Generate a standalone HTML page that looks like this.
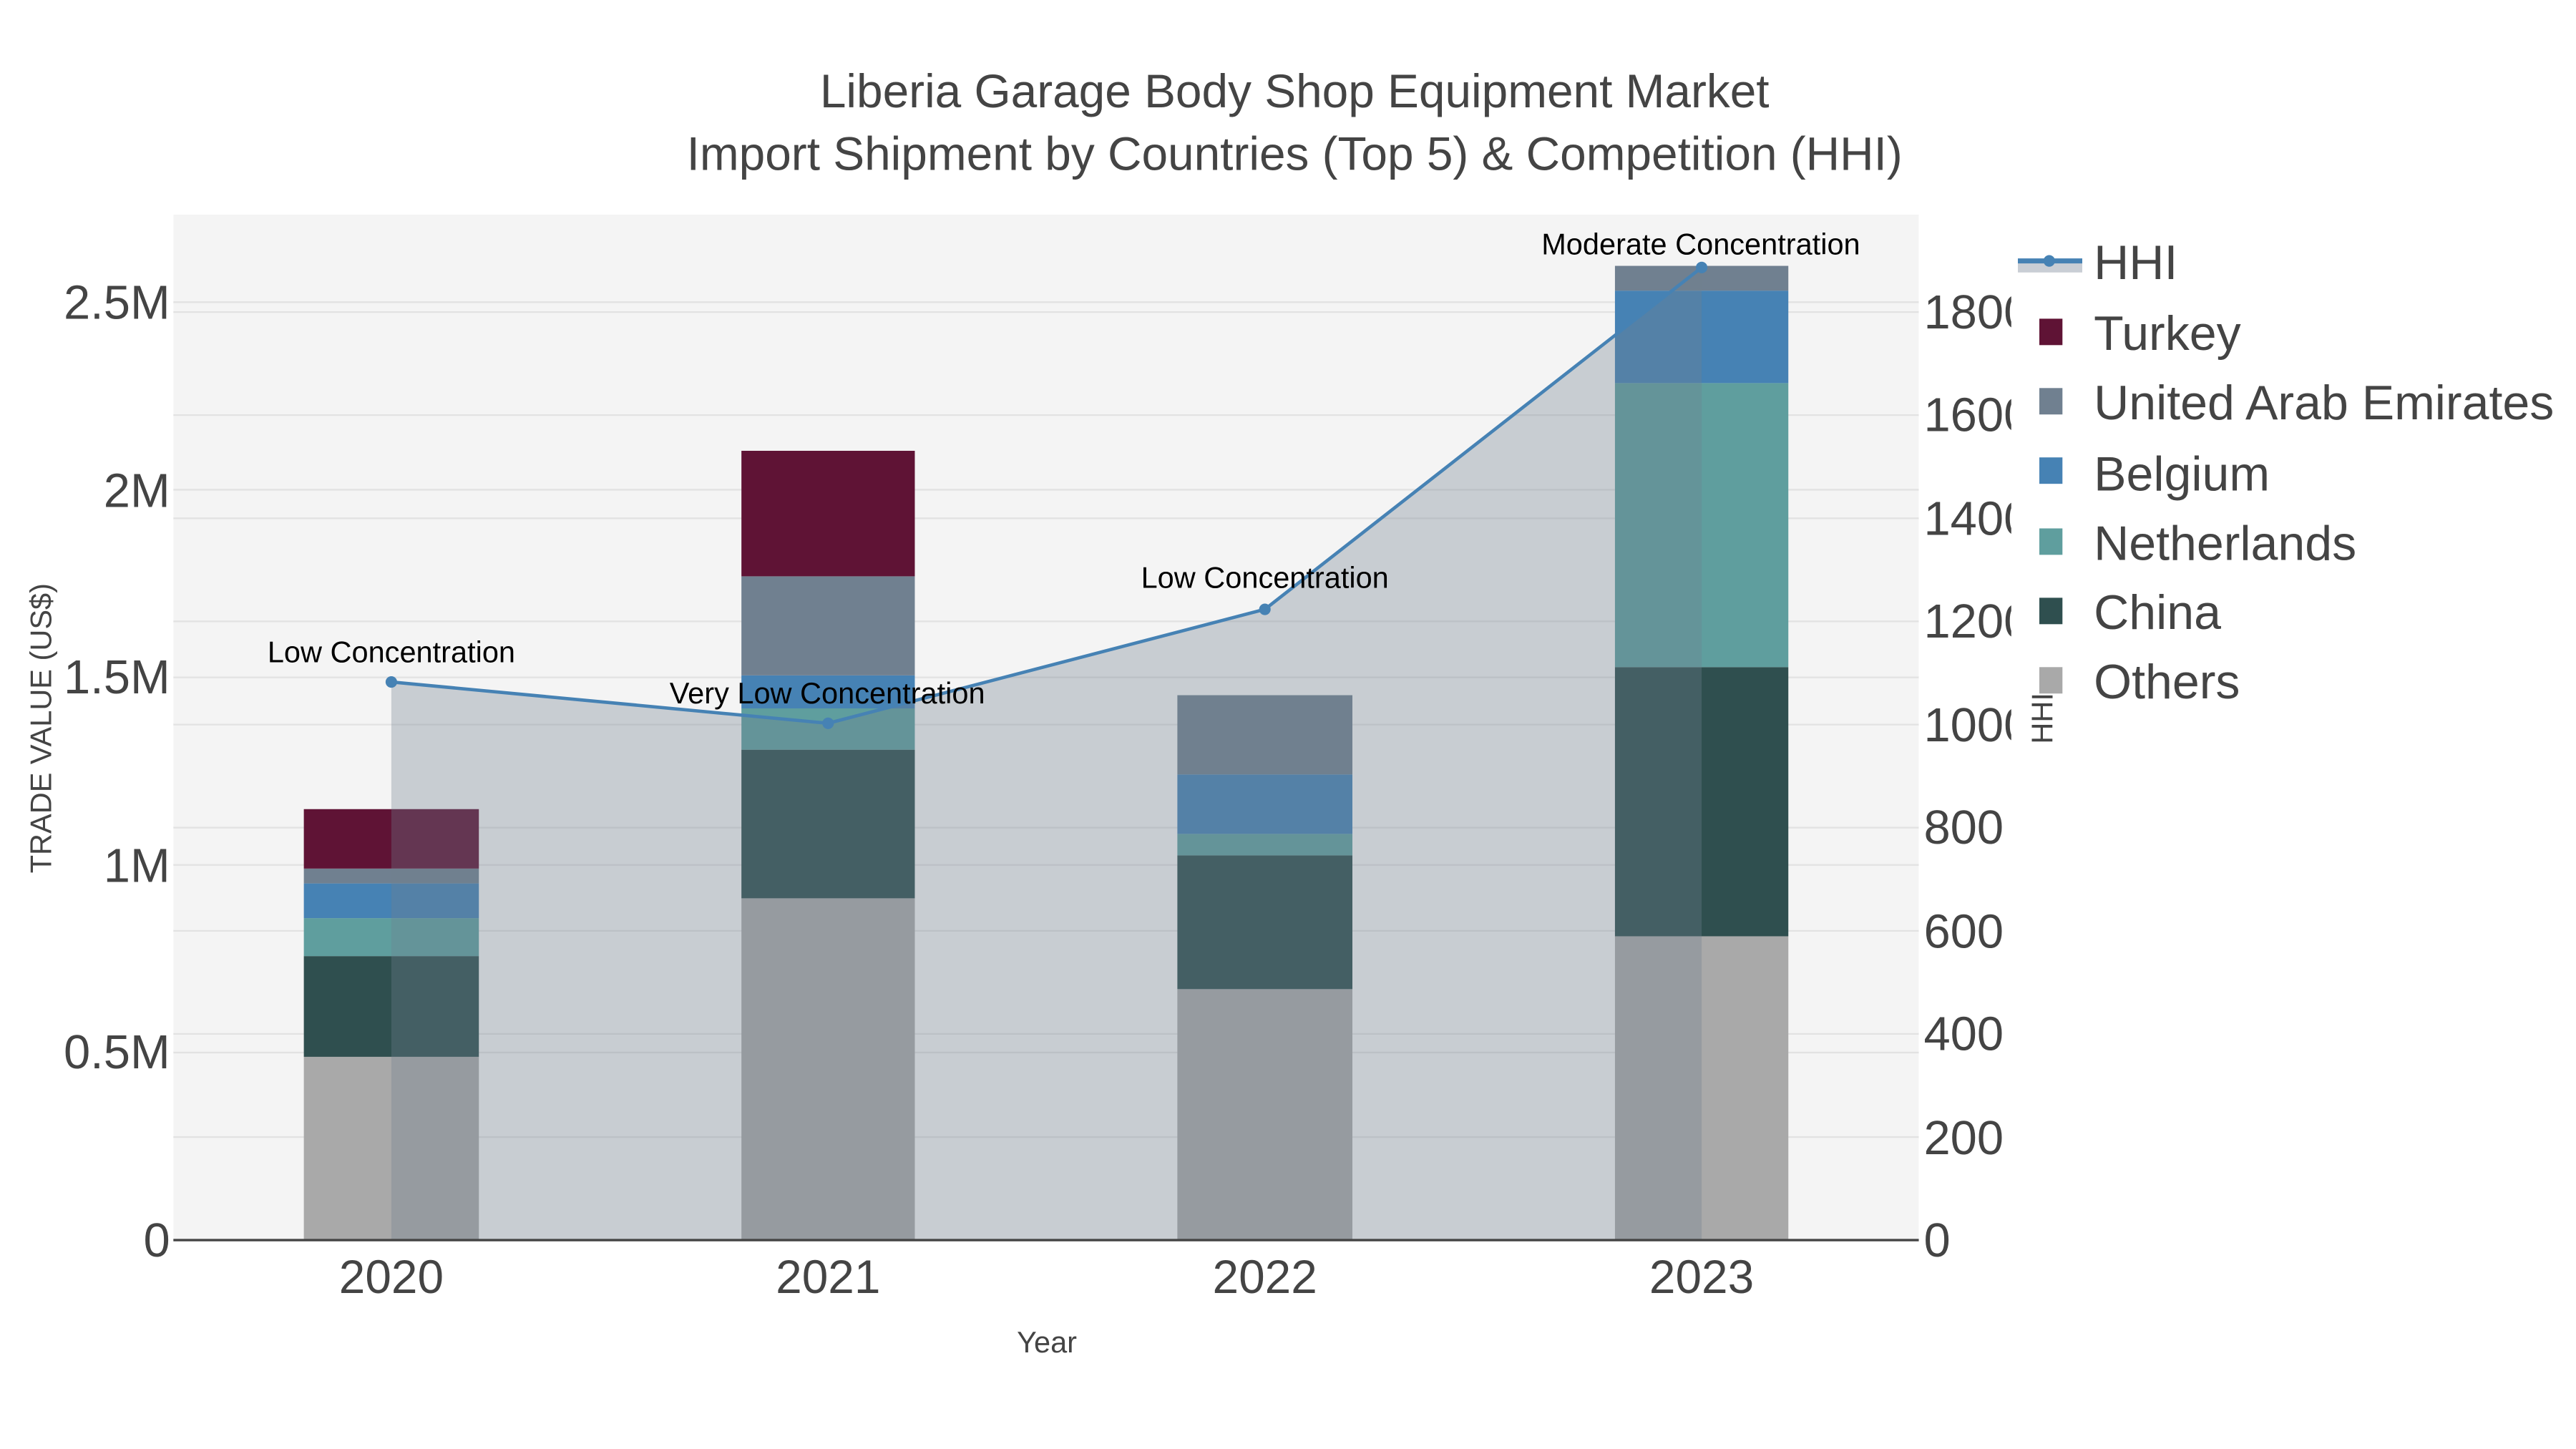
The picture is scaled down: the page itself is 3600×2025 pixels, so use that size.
<!DOCTYPE html>
<html><head><meta charset="utf-8"><style>
html,body{margin:0;padding:0;background:#fff;}
svg{display:block;}
text{font-family:"Liberation Sans",sans-serif;}
</style></head><body>
<svg width="3600" height="2025" viewBox="0 0 1560 877.5" xmlns="http://www.w3.org/2000/svg">
<defs><clipPath id="rc"><rect x="1160" y="0" width="58" height="877"/></clipPath></defs>
<rect x="0" y="0" width="1560" height="877.5" fill="#fff"/>
<rect x="105" y="130" width="1057" height="621" fill="#f4f4f4"/>
<g stroke="#e2e2e2" stroke-width="1">
<line x1="105" x2="1162" y1="637.4" y2="637.4"/><line x1="105" x2="1162" y1="523.8" y2="523.8"/>
<line x1="105" x2="1162" y1="410.2" y2="410.2"/><line x1="105" x2="1162" y1="296.6" y2="296.6"/>
<line x1="105" x2="1162" y1="183" y2="183"/>
<line x1="105" x2="1162" y1="688.6" y2="688.6"/><line x1="105" x2="1162" y1="626.1" y2="626.1"/>
<line x1="105" x2="1162" y1="563.7" y2="563.7"/><line x1="105" x2="1162" y1="501.2" y2="501.2"/>
<line x1="105" x2="1162" y1="438.8" y2="438.8"/><line x1="105" x2="1162" y1="376.3" y2="376.3"/>
<line x1="105" x2="1162" y1="313.9" y2="313.9"/><line x1="105" x2="1162" y1="251.4" y2="251.4"/>
<line x1="105" x2="1162" y1="189" y2="189"/>
</g>
<rect x="184" y="640" width="106" height="111" fill="#a9a9a9"/>
<rect x="184" y="579" width="106" height="61" fill="#2f4f4f"/>
<rect x="184" y="556" width="106" height="23" fill="#5f9e9e"/>
<rect x="184" y="535" width="106" height="21" fill="#4682b4"/>
<rect x="184" y="526" width="106" height="9" fill="#708090"/>
<rect x="184" y="490" width="106" height="36" fill="#5f1335"/>
<rect x="449" y="544" width="105" height="207" fill="#a9a9a9"/>
<rect x="449" y="454" width="105" height="90" fill="#2f4f4f"/>
<rect x="449" y="429" width="105" height="25" fill="#5f9e9e"/>
<rect x="449" y="409" width="105" height="20" fill="#4682b4"/>
<rect x="449" y="349" width="105" height="60" fill="#708090"/>
<rect x="449" y="273" width="105" height="76" fill="#5f1335"/>
<rect x="713" y="599" width="106" height="152" fill="#a9a9a9"/>
<rect x="713" y="518" width="106" height="81" fill="#2f4f4f"/>
<rect x="713" y="505" width="106" height="13" fill="#5f9e9e"/>
<rect x="713" y="469" width="106" height="36" fill="#4682b4"/>
<rect x="713" y="421" width="106" height="48" fill="#708090"/>
<rect x="978" y="567" width="105" height="184" fill="#a9a9a9"/>
<rect x="978" y="404" width="105" height="163" fill="#2f4f4f"/>
<rect x="978" y="232" width="105" height="172" fill="#5f9e9e"/>
<rect x="978" y="176" width="105" height="56" fill="#4682b4"/>
<rect x="978" y="161" width="105" height="15" fill="#708090"/>
<polygon points="237,413 501.5,438 766,369 1030.5,162 1030.5,751 237,751" fill="#708090" fill-opacity="0.33"/>
<line x1="105" x2="1162" y1="751" y2="751" stroke="#444" stroke-width="1.5"/>
<polyline points="237,413 501.5,438 766,369 1030.5,162" fill="none" stroke="#4682b4" stroke-width="2"/>
<g fill="#4682b4"><circle cx="237" cy="413" r="3.5"/><circle cx="501.5" cy="438" r="3.5"/><circle cx="766" cy="369" r="3.5"/><circle cx="1030.5" cy="162" r="3.5"/></g>
<g font-size="18" fill="#000" text-anchor="middle">
<text x="237" y="401">Low Concentration</text>
<text x="501" y="426">Very Low Concentration</text>
<text x="766" y="356">Low Concentration</text>
<text x="1030" y="154">Moderate Concentration</text>
</g>
<g font-size="28.5" fill="#444" text-anchor="middle">
<text x="784" y="65">Liberia Garage Body Shop Equipment Market</text>
<text x="784" y="103">Import Shipment by Countries (Top 5) &amp; Competition (HHI)</text>
</g>
<g font-size="29" fill="#444" text-anchor="end">
<text x="103" y="761">0</text><text x="103" y="647">0.5M</text><text x="103" y="534">1M</text>
<text x="103" y="420">1.5M</text><text x="103" y="307">2M</text><text x="103" y="193">2.5M</text>
</g>
<g font-size="29" fill="#444" clip-path="url(#rc)">
<text x="1165" y="761">0</text><text x="1165" y="699">200</text><text x="1165" y="636">400</text>
<text x="1165" y="574">600</text><text x="1165" y="511">800</text><text x="1165" y="449">1000</text>
<text x="1165" y="386">1200</text><text x="1165" y="324">1400</text><text x="1165" y="261">1600</text>
<text x="1165" y="199">1800</text>
</g>
<text x="1243" y="435" font-size="18" fill="#444" text-anchor="middle" transform="rotate(-90 1243 435)">HHI</text>
<g font-size="28.5" fill="#444" text-anchor="middle">
<text x="237" y="783">2020</text><text x="501.5" y="783">2021</text><text x="766" y="783">2022</text><text x="1030.5" y="783">2023</text>
</g>
<text x="634" y="819" font-size="18" fill="#444" text-anchor="middle">Year</text>
<text x="31" y="441" font-size="18" fill="#444" text-anchor="middle" transform="rotate(-90 31 441)">TRADE VALUE (US$)</text>
<rect x="1218" y="135" width="342" height="300" fill="#fff" fill-opacity="0"/>
<rect x="1222" y="158" width="39" height="7" fill="#c9ced5"/>
<line x1="1222" x2="1261" y1="158" y2="158" stroke="#4682b4" stroke-width="3"/>
<circle cx="1241" cy="158" r="3.5" fill="#4682b4"/>
<rect x="1235" y="193" width="14" height="16" fill="#5f1335"/>
<rect x="1235" y="235" width="14" height="16" fill="#708090"/>
<rect x="1235" y="277" width="14" height="16" fill="#4682b4"/>
<rect x="1235" y="320" width="14" height="16" fill="#5f9e9e"/>
<rect x="1235" y="362" width="14" height="16" fill="#2f4f4f"/>
<rect x="1235" y="404" width="14" height="16" fill="#a9a9a9"/>
<g font-size="29.5" fill="#444">
<text x="1268" y="169">HHI</text><text x="1268" y="212">Turkey</text>
<text x="1268" y="254">United Arab Emirates</text><text x="1268" y="297">Belgium</text>
<text x="1268" y="339">Netherlands</text><text x="1268" y="381">China</text>
<text x="1268" y="423">Others</text>
</g>
</svg>
</body></html>
